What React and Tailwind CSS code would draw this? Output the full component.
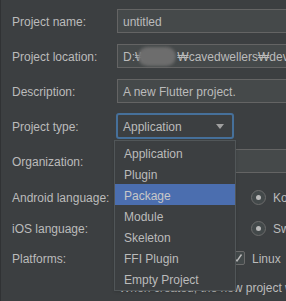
import React from 'react'

const font = { fontFamily: '"Liberation Sans", "Noto Sans CJK KR", sans-serif' }

function Field({ children, className = '' }) {
	return (
		<div className={`relative flex h-[24px] w-[200px] shrink-0 items-center border border-[#646464] bg-[#45494a] pl-[5px] pt-[2px] whitespace-nowrap ${className}`}>
			{children}
		</div>
	)
}

function Label({ children }) {
	return <div className="w-[105px] shrink-0 whitespace-nowrap pt-[2px]">{children}</div>
}

function Radio({ label }) {
	return (
		<div className="flex items-center gap-[7px] whitespace-nowrap">
			<span className="flex h-[15px] w-[15px] shrink-0 items-center justify-center rounded-full border border-[#6b6b6b] bg-[#43494a]">
				<span className="h-[5px] w-[5px] rounded-full bg-[#bbbbbb]" />
			</span>
			<span className="pt-[2px]">{label}</span>
		</div>
	)
}

const items = ['Application', 'Plugin', 'Package', 'Module', 'Skeleton', 'FFI Plugin', 'Empty Project']

export default function App() {
	return (
		<div
			className="relative h-[301px] w-[286px] overflow-hidden border-l border-[#303234] bg-[#3c3f41] text-[12px] leading-[16px] text-[#bbbbbb]"
			style={font}
		>
			<div className="flex flex-col pl-[11px] pt-[9px]">
				<div className="flex items-center">
					<Label>Project name:</Label>
					<Field>untitled</Field>
				</div>

				<div className="mt-[11px] flex items-center">
					<Label>Project location:</Label>
					<Field>
						D:₩<span className="inline-block w-[31px]" />₩cavedwellers₩dev₩
						<span className="absolute left-[20px] top-[2px] h-[19px] w-[38px] rounded-full bg-[#6d6d6d] blur-[1.5px]" />
					</Field>
				</div>

				<div className="mt-[11px] flex items-center">
					<Label>Description:</Label>
					<Field>A new Flutter project.</Field>
				</div>

				<div className="mt-[10px] flex items-center">
					<Label>Project type:</Label>
					<div className="-ml-[1px] flex h-[26px] w-[118px] items-center justify-between rounded-[3px] border-2 border-[#46709a] bg-[#3c3f41] pl-[5px] pr-[8px]">
						<span className="pt-[2px]">Application</span>
						<svg width="8" height="5" viewBox="0 0 8 5">
							<path d="M0 0 H8 L4 5 Z" fill="#a0a0a0" />
						</svg>
					</div>
				</div>

				<div className="mt-[10px] flex items-center">
					<Label>Organization:</Label>
					<Field>com.example</Field>
				</div>

				<div className="mt-[12px] flex h-[24px] items-center">
					<Label>Android language:</Label>
					<div className="ml-[134px]">
						<Radio label="Kotlin" />
					</div>
				</div>

				<div className="mt-[7px] flex h-[24px] items-center">
					<Label>iOS language:</Label>
					<div className="ml-[134px]">
						<Radio label="Swift" />
					</div>
				</div>

				<div className="mt-[6px] flex h-[24px] items-center">
					<Label>Platforms:</Label>
					<div className="ml-[114px] flex items-center gap-[7px] whitespace-nowrap">
						<span className="flex h-[14px] w-[14px] shrink-0 items-center justify-center rounded-[2px] border border-[#6b6b6b] bg-[#43494a]">
							<svg width="10" height="10" viewBox="0 0 10 10">
								<path d="M1.5 5.5 L4 8 L8.5 1.5" stroke="#bbbbbb" strokeWidth="1.4" fill="none" />
							</svg>
						</span>
						<span className="pt-[2px]">Linux</span>
					</div>
				</div>

				<div className="mt-[10px] pl-[107px] whitespace-nowrap">
					When created, the new project will run on the selected platforms
				</div>
			</div>

			<div className="absolute left-[113px] top-[140px] flex w-[122px] flex-col border border-[#515658] bg-[#3c3f41] py-[1px] shadow-sm">
				{items.map((item) => (
					<div
						key={item}
						className={`flex h-[21px] items-center pl-[9px] pt-[2px] whitespace-nowrap ${item === 'Package' ? 'bg-[#4b6eaf] text-[#c8c8c8]' : ''}`}
					>
						{item}
					</div>
				))}
			</div>
		</div>
	)
}
